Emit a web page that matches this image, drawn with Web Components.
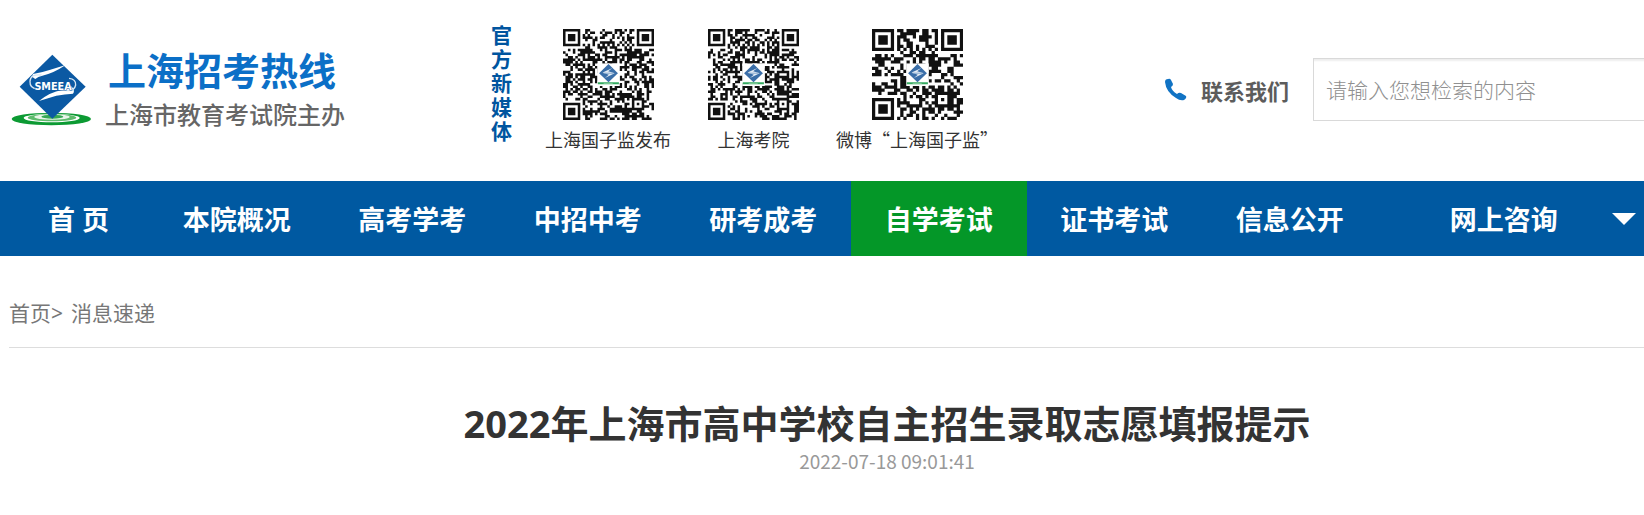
<!DOCTYPE html>
<html lang="zh-CN">
<head>
<meta charset="utf-8">
<meta name="viewport" content="width=device-width, initial-scale=1">
<title>上海招考热线</title>
<style>
body {
  margin: 0;
  background: #fff;
  color: #333;
  font-family: "Noto Sans CJK SC", sans-serif;
}
</style>
</head>
<body>
<site-header>
  <site-brand slot="brand"></site-brand>
  <media-codes slot="media">
    <qr-card modules="37" seed="11">上海国子监发布</qr-card>
    <qr-card modules="37" seed="29">上海考院</qr-card>
    <qr-card modules="29" seed="47">微博“上海国子监”</qr-card>
  </media-codes>
  <site-search slot="tools"></site-search>
</site-header>
<site-nav>
  <nav-item home>首 页</nav-item>
  <nav-item>本院概况</nav-item>
  <nav-item>高考学考</nav-item>
  <nav-item>中招中考</nav-item>
  <nav-item>研考成考</nav-item>
  <nav-item active>自学考试</nav-item>
  <nav-item>证书考试</nav-item>
  <nav-item>信息公开</nav-item>
  <nav-item more>网上咨询</nav-item>
</site-nav>
<bread-crumb></bread-crumb>
<news-article>
  <span slot="title">2022年上海市高中学校自主招生录取志愿填报提示</span>
  <span slot="date">2022-07-18 09:01:41</span>
</news-article>

<script>
/**
 * Attach an open shadow root filled with the given markup
 */
function render(host, html) {
  const template = document.createElement("template");
  template.innerHTML = html;
  const root = host.attachShadow({ mode: "open" });
  root.appendChild(template.content.cloneNode(true));
  return root;
}

class SiteHeader extends HTMLElement {
  constructor() {
    super();
    render(this, `
<style>
:host {
  display: block;
}
header {
  display: flex;
  justify-content: space-between;
  align-items: flex-start;
  box-sizing: border-box;
  min-height: 181px;
  padding-left: 10px;
}
</style>
<header>
  <slot name="brand"></slot>
  <slot name="media"></slot>
  <slot name="tools"></slot>
</header>`);
  }
}

class SiteBrand extends HTMLElement {
  constructor() {
    super();
    render(this, `
<style>
:host {
  display: block;
  padding-top: 45px;
}
a {
  display: flex;
  align-items: center;
  gap: 12px;
  color: inherit;
  text-decoration: none;
}
svg {
  width: 83px;
  height: 72px;
}
.names {
  display: flex;
  flex-direction: column;
}
strong {
  padding-left: 3px;
  color: #0b6fc7;
  font-size: 38px;
  font-weight: 700;
  line-height: 48px;
}
small {
  color: #666;
  font-size: 24px;
  font-weight: 500;
  line-height: 42px;
}
</style>
<a href="#">
  <svg viewBox="15 24 249 216" aria-hidden="true">
    <ellipse cx="139" cy="219" rx="119" ry="19" fill="#0c9a33"/>
    <ellipse cx="140" cy="216" rx="84" ry="13" fill="#fff"/>
    <ellipse cx="141" cy="215" rx="73" ry="11" fill="#5dbb6c"/>
    <ellipse cx="141" cy="213" rx="53" ry="8" fill="#e7f5e9"/>
    <ellipse cx="142" cy="212" rx="33" ry="6" fill="#34a853"/>
    <path d="M142 26 242 122 142 218 44 122Z" fill="#0b59a3"/>
    <path d="M182 57Q145 82 112 89Q99 91 91 99Q79 94 84 84Q112 79 136 71Z" fill="#fff"/>
    <path d="M102 165Q135 138 171 132Q190 129 197 119Q212 130 204 143Q180 145 154 149Z" fill="#fff"/>
    <path d="M110 87Q76 83 75 106Q74 127 96 129M182 133Q208 137 212 117Q213 99 192 97" fill="none" stroke="#d7e6f3" stroke-width="4"/>
    <text x="144" y="131" text-anchor="middle" font-family="DejaVu Sans" font-weight="700" font-size="29" fill="#fff" stroke="#0b59a3" stroke-width="3" paint-order="stroke">SMEEA</text>
  </svg>
  <span class="names">
    <strong>上海招考热线</strong>
    <small>上海市教育考试院主办</small>
  </span>
</a>`);
  }
}

class MediaCodes extends HTMLElement {
  constructor() {
    super();
    render(this, `
<style>
:host {
  display: flex;
  gap: 32px;
  margin-right: 20px;
}
h2 {
  width: 22px;
  margin: 22px 0 0;
  color: #00559f;
  font-size: 21px;
  line-height: 24px;
  word-break: break-all;
}
.codes {
  display: flex;
  gap: 37px;
  padding-top: 29px;
}
</style>
<h2>官方新媒体</h2>
<div class="codes"><slot></slot></div>`);
  }
}

/**
 * A QR-like code with a caption.
 * modules: modules per side, seed: picks the data pattern
 */
class QrCard extends HTMLElement {
  constructor() {
    super();
    const root = render(this, `
<style>
:host {
  display: flex;
  flex-direction: column;
  align-items: center;
  gap: 6px;
  font-size: 18px;
  line-height: 26px;
  white-space: nowrap;
}
.code {
  width: 91px;
  height: 91px;
}
</style>
<svg class="code" aria-hidden="true">
  <path class="data" fill="#111"/>
  <svg class="mark" viewBox="0 0 70 70">
    <path d="M0 0H70V70H0Z" fill="#fff"/>
    <path d="M35 3 64 31 35 59 6 31Z" fill="#3a6ea8"/>
    <path d="M17 29 47 15 34 25 54 31 24 46 36 36Z" fill="#e4edf6"/>
    <path d="M20 31H51" stroke="#7fa3ca" stroke-width="3"/>
    <path d="M2 59H67V65H2Z" fill="#35aa61"/>
    <path d="M20 63H48" stroke="#a8dcb8" stroke-width="2"/>
  </svg>
</svg>
<slot></slot>`);
    const n = Number(this.getAttribute("modules")) || 29;
    const seed = Number(this.getAttribute("seed")) || 1;
    const box = n * 0.25;
    const mark = root.querySelector(".mark");
    root.querySelector(".code").setAttribute("viewBox", `0 0 ${n} ${n}`);
    root.querySelector(".data").setAttribute("d", qrPath(n, seed));
    mark.setAttribute("x", (n - box) / 2);
    mark.setAttribute("y", (n - box) / 2);
    mark.setAttribute("width", box);
    mark.setAttribute("height", box);
  }
}

function qrPath(n, seed) {
  let state = seed * 7919;
  let d = "";
  for (let y = 0; y < n; y++) {
    for (let x = 0; x < n; x++) {
      state = (state * 16807) % 2147483647;
      if (isDark(x, y, n, state / 2147483647)) {
        d += `M${x} ${y}h1.03v1.03h-1.03z`;
      }
    }
  }
  return d;
}

function isDark(x, y, n, random) {
  // finder patterns, with their quiet ring
  for (const [cx, cy] of [[3, 3], [n - 4, 3], [3, n - 4]]) {
    const ring = Math.max(Math.abs(x - cx), Math.abs(y - cy));
    if (ring <= 4) return ring !== 2 && ring !== 4;
  }
  // alignment pattern
  const align = Math.max(Math.abs(x - n + 7), Math.abs(y - n + 7));
  if (align <= 2) return align !== 1;
  // timing lines
  if (x === 6) return y % 2 === 0;
  if (y === 6) return x % 2 === 0;
  return random < 0.52;
}

class SiteSearch extends HTMLElement {
  constructor() {
    super();
    render(this, `
<style>
:host {
  display: flex;
  align-items: center;
  width: 480px;
  padding-top: 58px;
}
a {
  display: flex;
  align-items: center;
  gap: 14px;
  margin-right: 24px;
  color: #5c5c5c;
  font-size: 22px;
  font-weight: 700;
  text-decoration: none;
  white-space: nowrap;
}
svg {
  width: 23px;
  height: 23px;
}
input {
  flex: 1;
  box-sizing: border-box;
  min-width: 0;
  height: 63px;
  padding: 0 12px 2px;
  border: 1px solid #d9d9d9;
  border-right: 0;
  border-radius: 0;
  box-shadow: inset 0 4px 2px -2px #eee;
  background: #fff;
  font: inherit;
  font-size: 21px;
  outline: 0;
}
input::placeholder {
  color: #909090;
  font-weight: 300;
}
</style>
<a href="#">
  <svg viewBox="0 0 23 23" aria-hidden="true">
    <path d="M1 4Q1 1 4 1Q6 0 7 2L9 6Q9 8 7 9Q8 13 13 16Q15 14 17 15L22 18Q23 20 20 22Q16 23 12 20Q2 14 1 4Z" fill="#1173c4"/>
  </svg>
  联系我们
</a>
<input type="text" aria-label="搜索" placeholder="请输入您想检索的内容">`);
  }
}

class SiteNav extends HTMLElement {
  constructor() {
    super();
    render(this, `
<style>
:host {
  display: block;
  background: #0059a1;
}
nav {
  display: grid;
  grid-template-columns: 298fr repeat(7, 351fr) 533fr;
  min-height: 75px;
}
</style>
<nav><slot></slot></nav>`);
  }
}

class NavItem extends HTMLElement {
  constructor() {
    super();
    const root = render(this, `
<style>
:host {
  display: flex;
  color: #fff;
  font-family: "Noto Sans", "Noto Sans CJK SC", sans-serif;
  font-size: 27px;
  font-weight: 700;
  white-space: nowrap;
}
:host([active]) {
  background: #049728;
}
a {
  display: flex;
  flex: 1;
  align-items: center;
  justify-content: center;
  color: inherit;
  text-decoration: none;
}
:host([home]) a {
  padding-left: 8px;
}
:host([more]) a {
  padding-left: 26px;
}
button {
  display: flex;
  align-items: center;
  padding: 0 8px;
  border: 0;
  background: none;
  color: inherit;
}
svg {
  width: 24px;
  height: 12px;
}
</style>
<a href="#"><slot></slot></a>
<button type="button" aria-label="更多"><svg viewBox="0 0 24 12"><path d="M0 0H24L12 12Z" fill="currentColor"/></svg></button>`);
    if (!this.hasAttribute("more")) {
      root.querySelector("button").remove();
    }
  }
}

class BreadCrumb extends HTMLElement {
  constructor() {
    super();
    render(this, `
<style>
:host {
  display: block;
  margin-left: 9px;
  padding: 41px 0 18px;
  border-bottom: 1px solid #ddd;
  color: #777;
  font-family: "Noto Sans", "Noto Sans CJK SC", sans-serif;
  font-size: 21px;
  line-height: 32px;
}
nav {
  display: flex;
}
a {
  color: inherit;
  text-decoration: none;
}
span {
  margin-right: 8px;
}
</style>
<nav><a href="#">首页</a><span>&gt;</span><a href="#">消息速递</a></nav>`);
  }
}

class NewsArticle extends HTMLElement {
  constructor() {
    super();
    render(this, `
<style>
:host {
  display: block;
  padding: 50px 0 32px 130px;
  text-align: center;
}
h1 {
  margin: 0;
  font-family: "Noto Sans", "Noto Sans CJK SC", sans-serif;
  font-size: 38px;
  line-height: 50px;
}
p {
  margin: 0;
  color: #999;
  font-size: 19px;
  line-height: 26px;
}
</style>
<h1><slot name="title"></slot></h1>
<p><slot name="date"></slot></p>`);
  }
}

customElements.define("site-header", SiteHeader);
customElements.define("site-brand", SiteBrand);
customElements.define("media-codes", MediaCodes);
customElements.define("qr-card", QrCard);
customElements.define("site-search", SiteSearch);
customElements.define("site-nav", SiteNav);
customElements.define("nav-item", NavItem);
customElements.define("bread-crumb", BreadCrumb);
customElements.define("news-article", NewsArticle);
</script>
</body>
</html>
